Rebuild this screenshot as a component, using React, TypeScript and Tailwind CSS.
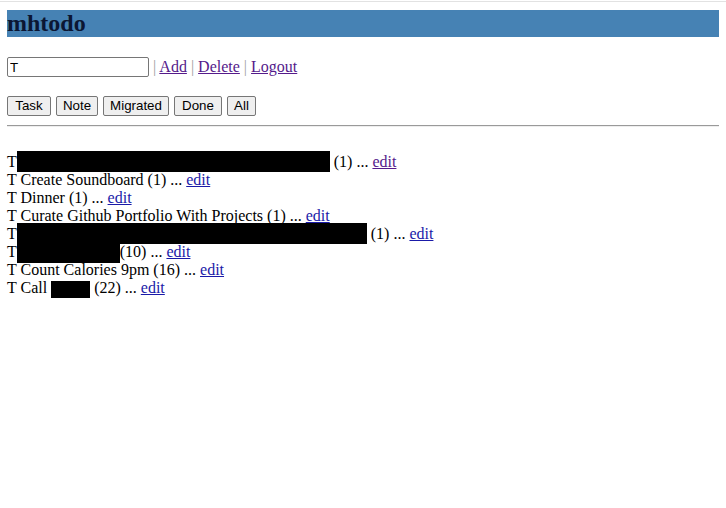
import React from "react";

const visited = "text-[#551a8b] underline";
const link = "text-[#1a1aa8] underline";

function Redact({ w, top, h }: { w: number; top: number; h: number }) {
  return (
    <span className="relative inline-block h-px" style={{ width: w }}>
      <span className="absolute left-0 w-full bg-black" style={{ top, height: h }} />
    </span>
  );
}

const buttons = [
  { label: "Task", cls: "w-[44px]" },
  { label: "Note", cls: "w-[42px]" },
  { label: "Migrated", cls: "w-[66px]" },
  { label: "Done", cls: "w-[48px]" },
  { label: "All", cls: "w-[29px]" },
];

export default function App() {
  return (
    <div className="min-h-[508px] w-[726px] bg-white font-['Liberation_Serif','Times_New_Roman',serif] text-black">
      <div className="mt-px h-px bg-[#e2e2e2]" />
      <div className="px-[7px]">
        <div className="mt-[8px] h-[27px] bg-[#4682b4] text-[24px] font-bold leading-[27px] text-[#0b1633]">
          mhtodo
        </div>

        <div className="mt-[20px] flex h-[20px] items-center text-[16px] leading-[18px]">
          <input
            defaultValue="T"
            className="h-[20px] w-[142px] rounded-[2px] border border-[#767676] bg-white px-[2px] font-['Liberation_Sans',Arial,sans-serif] text-[13.33px] text-black outline-none"
          />
          <span className="ml-[4px] whitespace-pre">
            <span className="text-[#a0a0a0]">|</span>{" "}
            <a className={visited} href="#">Add</a>{" "}
            <span className="text-[#a0a0a0]">|</span>{" "}
            <a className={visited} href="#">Delete</a>{" "}
            <span className="text-[#a0a0a0]">|</span>{" "}
            <a className={visited} href="#">Logout</a>
          </span>
        </div>

        <div className="mt-[19px] flex h-[20px] gap-[5px] font-['Liberation_Sans',Arial,sans-serif] text-[13.33px]">
          {buttons.map((b) => (
            <button
              key={b.label}
              className={`${b.cls} h-[20px] rounded-[2px] border border-[#767676] bg-[#efefef] px-0 text-center leading-[16px] text-black`}
            >
              {b.label}
            </button>
          ))}
        </div>

        <div className="mt-[9px] h-[2px] border-t border-[#9a9a9a] border-b-[#eeeeee] border-b" />

        <div className="mt-[26px] text-[16px] leading-[18px]">
          <div className="h-[18px] whitespace-pre">
            T<Redact w={313} top={-15} h={21} /> (1) ... <a className={visited} href="#">edit</a>
          </div>
          <div className="h-[18px] whitespace-pre">
            T Create Soundboard (1) ... <a className={link} href="#">edit</a>
          </div>
          <div className="h-[18px] whitespace-pre">
            T Dinner (1) ... <a className={link} href="#">edit</a>
          </div>
          <div className="h-[18px] whitespace-pre">
            T Curate Github Portfolio With Projects (1) ... <a className={link} href="#">edit</a>
          </div>
          <div className="h-[18px] whitespace-pre">
            T<Redact w={350} top={-15} h={21} /> (1) ... <a className={link} href="#">edit</a>
          </div>
          <div className="h-[18px] whitespace-pre">
            T<Redact w={103} top={-12} h={19} />(10) ... <a className={link} href="#">edit</a>
          </div>
          <div className="h-[18px] whitespace-pre">
            T Count Calories 9pm (16) ... <a className={link} href="#">edit</a>
          </div>
          <div className="h-[18px] whitespace-pre">
            T Call <Redact w={39} top={-11} h={17} /> (22) ... <a className={link} href="#">edit</a>
          </div>
        </div>
      </div>
    </div>
  );
}
